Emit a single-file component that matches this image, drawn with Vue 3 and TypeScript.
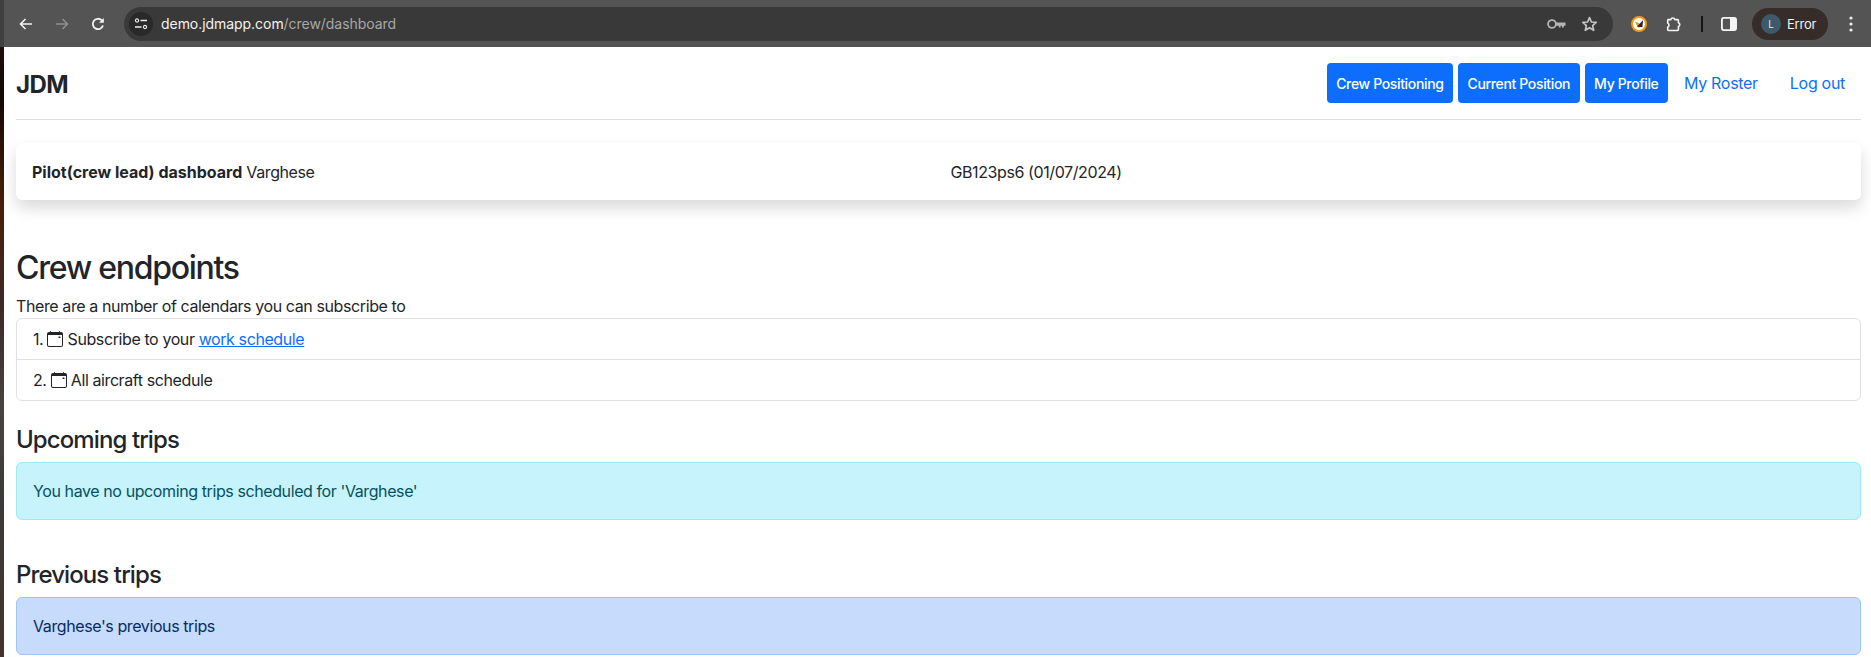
<script setup lang="ts">
const title = 'JDM'
const navButtons: string[] = ['Crew Positioning', 'Current Position', 'My Profile']
const navLinks: string[] = ['My Roster', 'Log out']
</script>

<template>
  <div class="window">
    <header class="toolbar">
      <div class="nav-icons">
        <svg class="ti" width="16" height="16" viewBox="0 0 16 16"><path d="M14 8H3M7.5 3 2.5 8l5 5" fill="none" stroke="#f2f2f2" stroke-width="1.6" /></svg>
        <svg class="ti" width="16" height="16" viewBox="0 0 16 16"><path d="M2 8h11M8.5 3l5 5-5 5" fill="none" stroke="#8f8f8f" stroke-width="1.6" /></svg>
        <svg class="ti" width="16" height="16" viewBox="0 0 16 16"><path d="M13 9.5A5.2 5.2 0 1 1 11.6 4.2L13 5.6" fill="none" stroke="#f2f2f2" stroke-width="1.8" /><path d="M13.8 2v4.8H9z" fill="#f2f2f2" /></svg>
      </div>
      <div class="omnibox">
        <span class="site">
          <svg width="14" height="12" viewBox="0 0 14 12"><circle cx="3" cy="2.5" r="1.6" fill="none" stroke="#eee" stroke-width="1.1" /><path d="M6.5 2.5H13M1 9h6.5" stroke="#eee" stroke-width="1.3" /><circle cx="11" cy="9" r="1.6" fill="none" stroke="#eee" stroke-width="1.1" /></svg>
        </span>
        <span class="url">demo.jdmapp.com<span class="path">/crew/dashboard</span></span>
        <span class="omni-right">
          <svg width="19" height="12" viewBox="0 0 19 12"><circle cx="5" cy="6" r="3.9" fill="none" stroke="#b5b5b5" stroke-width="1.8" /><path d="M9 4.4h9.5v3.4h-1.7v1.8h-1.9V7.8h-1.3v1.8h-1.8V7.8H9z" fill="#b5b5b5" /></svg>
          <svg width="17" height="16" viewBox="0 0 17 16"><path d="M8.5 1.6 10.4 6l4.8.4-3.6 3.2 1.1 4.7-4.2-2.5-4.2 2.5 1.1-4.7-3.6-3.2L6.6 6z" fill="none" stroke="#c4c4c4" stroke-width="1.7" stroke-linejoin="round" /></svg>
        </span>
      </div>
      <div class="ext-icons">
        <svg width="16" height="16" viewBox="0 0 16 16"><circle cx="8" cy="8" r="7" fill="#fff" stroke="#f09a13" stroke-width="2" /><path d="M3.8 5.6l4.6 1.6 1 4-2.4.6z" fill="#f09a13" /><path d="M12 4.2 6 10.6l5.4.6z" fill="#222" /></svg>
        <svg width="16" height="16" viewBox="0 0 16 16"><path d="M2.2 3.6h2.6a2.1 2.1 0 0 1 4.1 0h2.6c.5 0 .9.4.9.9v2.2a2 2 0 0 1 0 3.8v3.1c0 .5-.4.9-.9.9H2.6a.9.9 0 0 1-.9-.9v-2.4a2.3 2.3 0 0 0 0-4.1V4.5c0-.5.2-.9.5-.9z" fill="none" stroke="#f5f5f5" stroke-width="1.6" stroke-linejoin="round" /></svg>
        <span class="divider"></span>
        <svg width="16" height="14" viewBox="0 0 16 14"><rect x=".9" y=".9" width="14.2" height="12.2" rx="2" fill="none" stroke="#f5f5f5" stroke-width="1.8" /><rect x="9" y="1" width="6" height="12" fill="#f5f5f5" /></svg>
      </div>
      <div class="profile"><span class="avatar">L</span><span>Error</span></div>
      <svg class="dots" width="4" height="16" viewBox="0 0 4 16"><circle cx="2" cy="2" r="1.6" fill="#eee" /><circle cx="2" cy="8" r="1.6" fill="#eee" /><circle cx="2" cy="14" r="1.6" fill="#eee" /></svg>
    </header>

    <div class="below">
      <div class="edge"></div>
      <main class="page">
        <nav class="navbar">
          <span class="brand">{{ title }}</span>
          <div class="nav-actions">
            <a v-for="b in navButtons" :key="b" class="btn">{{ b }}</a>
            <a v-for="l in navLinks" :key="l" class="nav-link">{{ l }}</a>
          </div>
        </nav>
        <hr class="rule" />

        <section class="card">
          <div><strong>Pilot(crew lead) dashboard</strong> Varghese</div>
          <div>GB123ps6 (01/07/2024)</div>
        </section>

        <h2>Crew endpoints</h2>
        <p class="intro">There are a number of calendars you can subscribe to</p>
        <ol class="list">
          <li>
            1.
            <svg class="cal" width="16" height="16" viewBox="0 0 16 16"><path d="M3.5 0a.5.5 0 0 1 .5.5V1h8V.5a.5.5 0 0 1 1 0V1h1a2 2 0 0 1 2 2v11a2 2 0 0 1-2 2H2a2 2 0 0 1-2-2V3a2 2 0 0 1 2-2h1V.5a.5.5 0 0 1 .5-.5zM1 4v10a1 1 0 0 0 1 1h12a1 1 0 0 0 1-1V4H1z" fill="#212529" /><rect x="11.5" y="5.5" width="2" height="1.6" rx=".4" fill="#212529" /></svg>
            Subscribe to your <a class="link" href="#">work schedule</a>
          </li>
          <li>
            2.
            <svg class="cal" width="16" height="16" viewBox="0 0 16 16"><path d="M3.5 0a.5.5 0 0 1 .5.5V1h8V.5a.5.5 0 0 1 1 0V1h1a2 2 0 0 1 2 2v11a2 2 0 0 1-2 2H2a2 2 0 0 1-2-2V3a2 2 0 0 1 2-2h1V.5a.5.5 0 0 1 .5-.5zM1 4v10a1 1 0 0 0 1 1h12a1 1 0 0 0 1-1V4H1z" fill="#212529" /><rect x="11.5" y="5.5" width="2" height="1.6" rx=".4" fill="#212529" /></svg>
            All aircraft schedule
          </li>
        </ol>

        <h4 class="upcoming">Upcoming trips</h4>
        <div class="alert info">You have no upcoming trips scheduled for 'Varghese'</div>

        <h4 class="previous">Previous trips</h4>
        <div class="alert primary">Varghese's previous trips</div>
      </main>
    </div>
  </div>
</template>

<style>
html, body { margin: 0; overflow: hidden; background: #fff; }
</style>

<style scoped>
.window { width: 1871px; height: 657px; overflow: hidden; font-family: Inter, "Liberation Sans", sans-serif; font-size: 16px; color: #212529; }
.toolbar { height: 47px; box-sizing: border-box; background: linear-gradient(90deg, #3f3f3f 0 4px, #545454 4px); display: flex; align-items: center; color: #f2f2f2; }
.nav-icons { display: flex; gap: 20px; margin-left: 18px; width: 106px; }
.ti { flex: none; }
.omnibox { width: 1489px; height: 34px; border-radius: 17px; background: #393939; display: flex; align-items: center; box-sizing: border-box; padding-left: 5px; }
.site { width: 24px; height: 24px; border-radius: 50%; background: #292929; display: flex; align-items: center; justify-content: center; }
.url { margin-left: 8px; font-size: 14px; letter-spacing: -.05px; color: #f3f3f3; }
.path { color: #a8a8a8; }
.omni-right { margin-left: auto; display: flex; align-items: center; gap: 15px; padding-right: 15px; }
.ext-icons { display: flex; align-items: center; margin-left: 18px; gap: 19px; }
.divider { width: 2px; height: 16px; background: #151515; margin: 0 -1px 0 0; }
.profile { margin-left: 15px; width: 76px; height: 32px; box-sizing: border-box; border-radius: 16px; background: #362c2a; display: flex; align-items: center; gap: 6px; padding-left: 9px; font-size: 13px; letter-spacing: -.2px; color: #f2f2f2; }
.avatar { width: 20px; height: 20px; border-radius: 50%; background: #3e5a6a; display: flex; align-items: center; justify-content: center; font-size: 10px; color: #e6e6e6; }
.dots { margin-left: 21px; }
.below { display: flex; height: 610px; }
.edge { width: 4px; background: linear-gradient(180deg, #1e0f08 0, #120805 50px, #4a1f0a 160px, #3a2a26 260px, #474340 360px, #3c3a38 460px, #43342c 610px); }
.page { flex: 1; background: #fff; padding: 0 10px 0 12px; min-width: 0; letter-spacing: -.4px; }
.navbar { display: flex; justify-content: space-between; align-items: center; height: 72px; }
.brand { font-size: 24px; font-weight: 700; letter-spacing: -.5px; padding-top: 2px; }
.nav-actions { display: flex; align-items: center; }
.btn { height: 40px; box-sizing: border-box; padding: 0 9.5px; margin-left: 5px; background: #0d6efd; color: #fff; border-radius: 4px; font-size: 14px; font-weight: 500; letter-spacing: -.35px; display: flex; align-items: center; }
.nav-link { color: #0d6efd; padding: 0 16px; letter-spacing: -.3px; }
.rule { margin: 0; border: 0; border-top: 1px solid #dedede; }
.card { margin-top: 23px; height: 57px; display: grid; grid-template-columns: 1fr 1fr; align-items: center; padding: 0 16px; border-radius: 6px; background: #fff; box-shadow: 0 8px 16px rgba(0, 0, 0, .15); }
.card strong { letter-spacing: 0; }
.card > div + div { padding-left: 12px; }
h2 { margin: 49px 0 0; font-size: 32px; line-height: 38px; font-weight: 500; letter-spacing: -1.28px; }
.intro { margin: 7px 0 0; line-height: 24px; }
.list { list-style: none; margin: 0; padding: 0; border: 1px solid #dee2e6; border-radius: 6px; }
.list li { height: 40px; box-sizing: border-box; padding: 8px 16px; line-height: 24px; }
.list li + li { border-top: 1px solid #dee2e6; height: 41px; }
.cal { vertical-align: -2px; }
.link { color: #0d6efd; text-decoration: underline; }
h4 { margin: 0; font-size: 24px; line-height: 29px; font-weight: 500; letter-spacing: -.9px; }
.upcoming { margin-top: 24px; }
.previous { margin-top: 40px; }
.alert { margin-top: 8px; height: 58px; box-sizing: border-box; padding: 0 16px; border: 1px solid; border-radius: 6px; display: flex; align-items: center; }
.info { background: #c6f3fc; border-color: #9eeaf9; color: #055160; }
.primary { background: #c7dbfd; border-color: #9ec5fe; color: #052c65; }
</style>
